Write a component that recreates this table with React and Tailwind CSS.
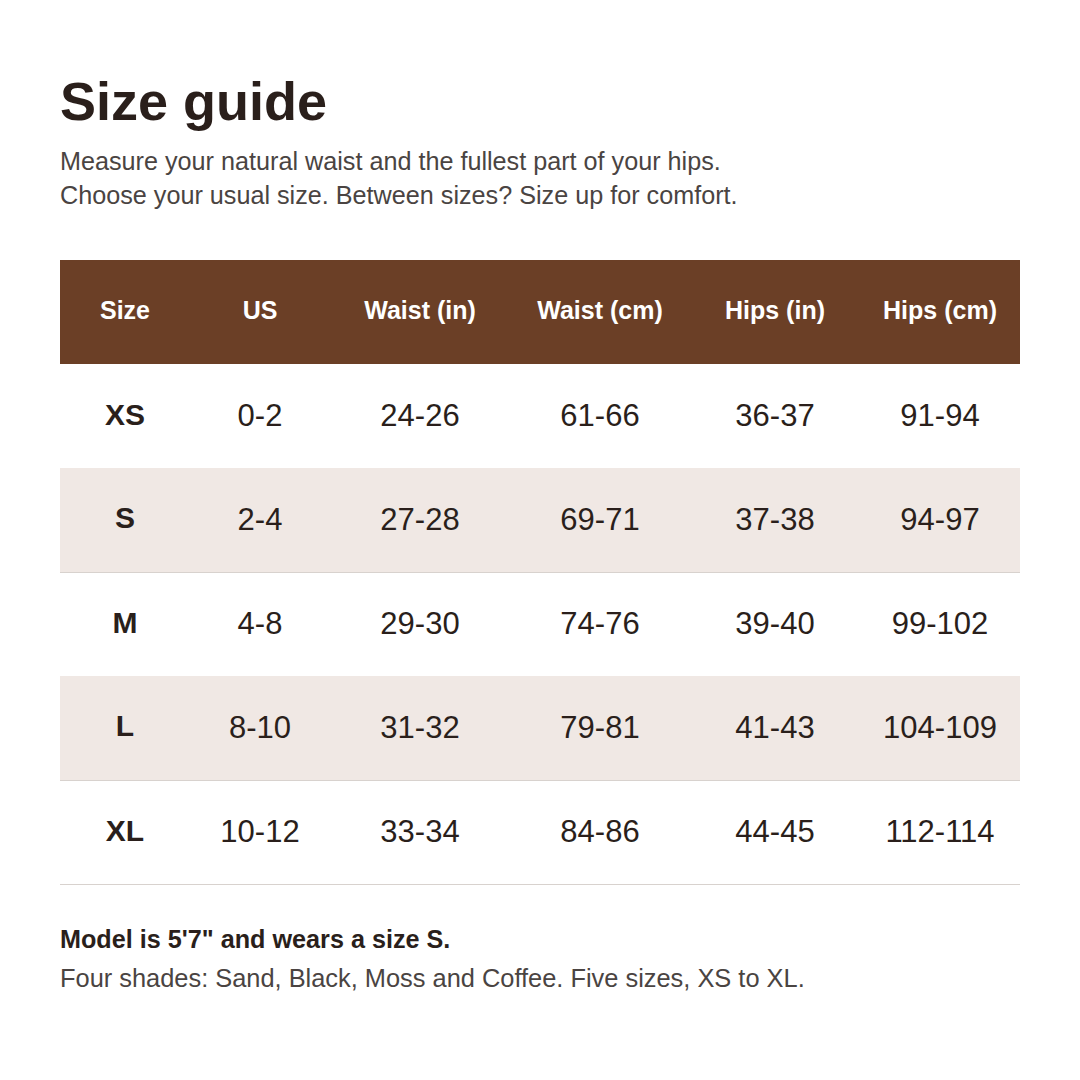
const columns = [
  { key: 'size', header: 'Size', width: 'w-[130px]' },
  { key: 'us', header: 'US', width: 'w-[140px]' },
  { key: 'waistIn', header: 'Waist (in)', width: 'w-[180px]' },
  { key: 'waistCm', header: 'Waist (cm)', width: 'w-[180px]' },
  { key: 'hipsIn', header: 'Hips (in)', width: 'w-[170px]' },
  { key: 'hipsCm', header: 'Hips (cm)', width: 'w-[160px]' },
];

const rows = [
  { size: 'XS', us: '0-2', waistIn: '24-26', waistCm: '61-66', hipsIn: '36-37', hipsCm: '91-94' },
  { size: 'S', us: '2-4', waistIn: '27-28', waistCm: '69-71', hipsIn: '37-38', hipsCm: '94-97' },
  { size: 'M', us: '4-8', waistIn: '29-30', waistCm: '74-76', hipsIn: '39-40', hipsCm: '99-102' },
  { size: 'L', us: '8-10', waistIn: '31-32', waistCm: '79-81', hipsIn: '41-43', hipsCm: '104-109' },
  { size: 'XL', us: '10-12', waistIn: '33-34', waistCm: '84-86', hipsIn: '44-45', hipsCm: '112-114' },
];

export default function App() {
  return (
    <div className="min-h-[1080px] w-[1080px] bg-white px-[60px] pt-[70px] font-['Liberation_Sans',Arial,sans-serif] text-[#2a1f1b]">
      <h1 className="text-[54px] font-bold leading-[62px]">Size guide</h1>
      <p className="mt-[12px] text-[25.2px] leading-[34px] text-[#4a4442]">
        Measure your natural waist and the fullest part of your hips.
        <br />
        Choose your usual size. Between sizes? Size up for comfort.
      </p>

      <table className="mt-[48px] w-[960px] table-fixed border-collapse">
        <thead>
          <tr className="h-[104px] bg-[#6b3f26] text-white">
            {columns.map((col) => (
              <th key={col.key} className={`${col.width} pb-[2px] text-center text-[25px] font-bold`}>
                {col.header}
              </th>
            ))}
          </tr>
        </thead>
        <tbody>
          {rows.map((row, i) => {
            const shaded = i % 2 === 1;
            const last = i === rows.length - 1;
            return (
              <tr
                key={row.size}
                className={
                  shaded
                    ? 'h-[104px] border-b border-[#d8d2ce] bg-[#f0e8e4]'
                    : last
                      ? 'h-[104px] border-b border-[#d8d2ce]'
                      : 'h-[104px]'
                }
              >
                {columns.map((col) => (
                  <td
                    key={col.key}
                    className={
                      col.key === 'size'
                        ? 'pb-[4px] text-center text-[30px] font-bold'
                        : 'text-center text-[31px]'
                    }
                  >
                    {row[col.key]}
                  </td>
                ))}
              </tr>
            );
          })}
        </tbody>
      </table>

      <p className="mt-[38px] text-[25.2px] font-bold leading-[32px]">Model is 5'7" and wears a size S.</p>
      <p className="mt-[7px] text-[25.4px] leading-[32px] text-[#4a4442]">
        Four shades: Sand, Black, Moss and Coffee. Five sizes, XS to XL.
      </p>
    </div>
  );
}
